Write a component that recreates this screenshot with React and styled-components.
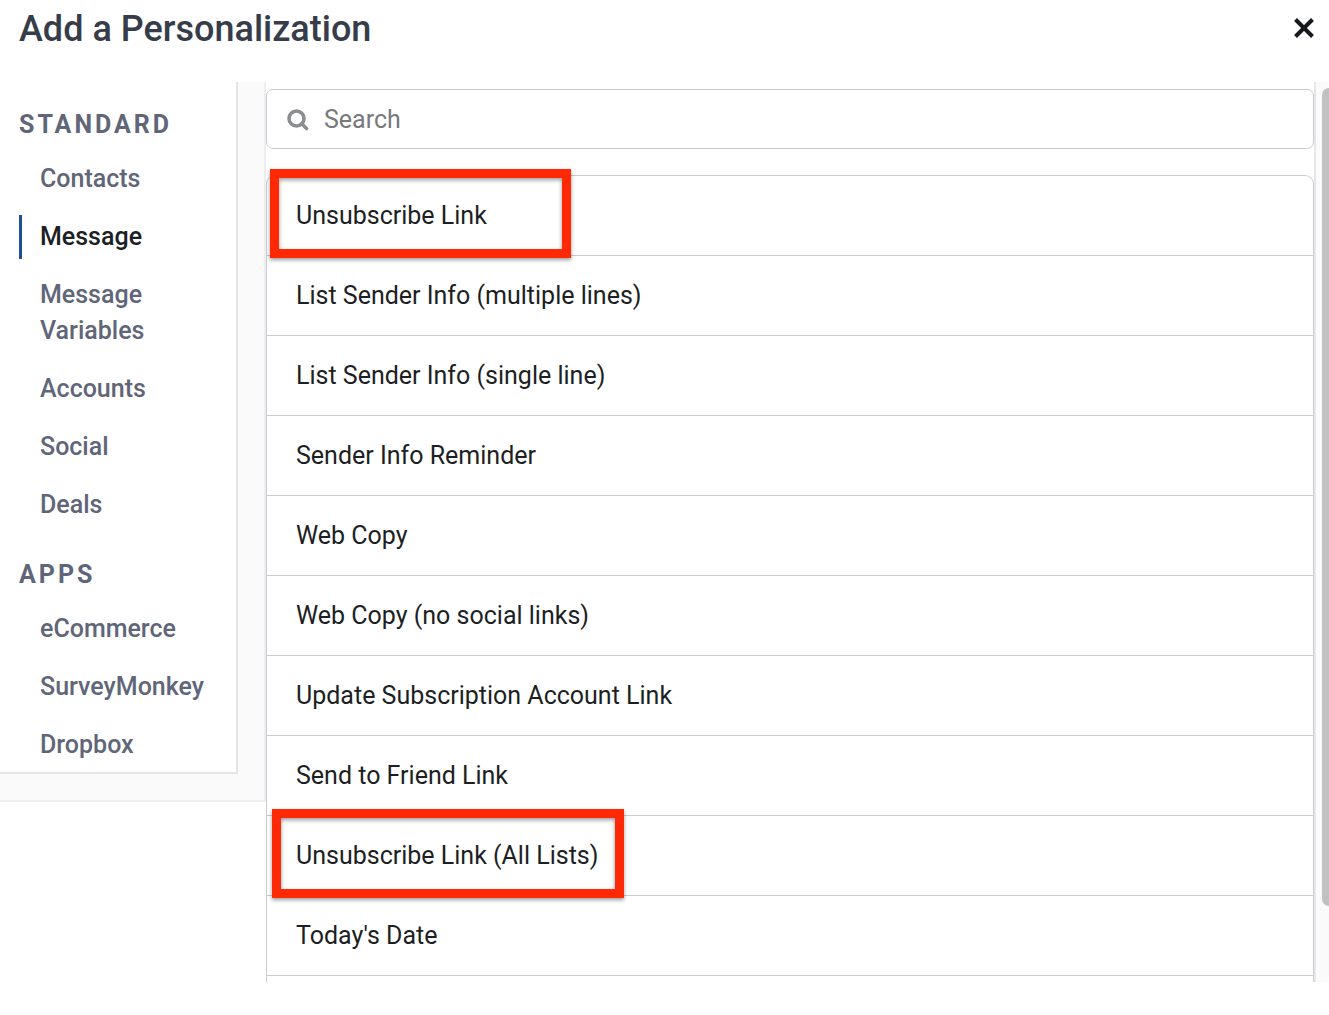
import React, { useState } from "react";
import styled, { createGlobalStyle } from "styled-components";

const sections = [
	{
		title: "Standard",
		items: ["Contacts", "Message", "Message Variables", "Accounts", "Social", "Deals"],
	},
	{
		title: "Apps",
		items: ["eCommerce", "SurveyMonkey", "Dropbox"],
	},
];

const personalizations = [
	{ label: "Unsubscribe Link", mark: { left: 3, width: 301 } },
	{ label: "List Sender Info (multiple lines)" },
	{ label: "List Sender Info (single line)" },
	{ label: "Sender Info Reminder" },
	{ label: "Web Copy" },
	{ label: "Web Copy (no social links)" },
	{ label: "Update Subscription Account Link" },
	{ label: "Send to Friend Link" },
	{ label: "Unsubscribe Link (All Lists)", mark: { left: 5, width: 352 } },
	{ label: "Today's Date" },
];

export default function App() {
	const [selected, setSelected] = useState("Message");
	const [query, setQuery] = useState("");

	const visible = personalizations.filter((item) =>
		item.label.toLowerCase().includes(query.toLowerCase())
	);

	return (
		<>
			<GlobalStyle />
			<Modal>
				<Header>
					<h1>Add a Personalization</h1>
					<CloseButton type="button" aria-label="Close">
						<svg viewBox="0 0 22 22" width="22" height="22">
							<path d="M2.5 2.5L19.5 19.5M19.5 2.5L2.5 19.5" stroke="currentColor" strokeWidth="4" />
						</svg>
					</CloseButton>
				</Header>

				<Body>
					<SidebarWrap>
						<Sidebar>
							{sections.map((section) => (
								<Section key={section.title}>
									<h2>{section.title}</h2>
									<ul>
										{section.items.map((item) => (
											<li key={item}>
												<NavButton
													type="button"
													$active={item === selected}
													onClick={() => setSelected(item)}
												>
													{item}
												</NavButton>
											</li>
										))}
									</ul>
								</Section>
							))}
						</Sidebar>
					</SidebarWrap>

					<Content>
						<SearchBox>
							<svg viewBox="0 0 22 22" width="22" height="22" aria-hidden="true">
								<circle cx="9.5" cy="9.5" r="7.5" fill="none" stroke="currentColor" strokeWidth="3.6" />
								<path
									d="M15 15L19.5 19.5"
									stroke="currentColor"
									strokeWidth="3.6"
									strokeLinecap="round"
								/>
							</svg>
							<input
								type="text"
								placeholder="Search"
								aria-label="Search"
								value={query}
								onChange={(e) => setQuery(e.target.value)}
							/>
						</SearchBox>

						<List>
							{visible.map((item) => (
								<Row key={item.label}>
									<button type="button">{item.label}</button>
									{item.mark && <Mark $left={item.mark.left} $width={item.mark.width} />}
								</Row>
							))}
						</List>
					</Content>

					<ScrollTrack>
						<ScrollThumb />
					</ScrollTrack>
				</Body>
			</Modal>
		</>
	);
}

const GlobalStyle = createGlobalStyle`
	* {
		box-sizing: border-box;
	}

	body {
		margin: 0;
		background-color: #fff;
		color: #1c1f24;
		font-family: Roboto, "Liberation Sans", sans-serif;
		font-size: 25px;
		line-height: 36px;
	}

	h1, h2, ul {
		margin: 0;
		padding: 0;
	}

	ul {
		list-style: none;
	}

	button, input {
		font: inherit;
		color: inherit;
		border: none;
		background: none;
	}

	button {
		cursor: pointer;
	}
`;

const Modal = styled.div`
	display: flex;
	flex-direction: column;
	height: 100vh;
	padding-bottom: 33px;
	overflow: hidden;
`;

const Header = styled.header`
	display: flex;
	flex: none;
	justify-content: space-between;
	align-items: flex-start;
	height: 82px;
	padding: 6px 14px 0 19px;

	h1 {
		color: #363c4a;
		font-size: 36px;
		font-weight: 500;
		line-height: 46px;
	}
`;

const CloseButton = styled.button`
	display: flex;
	align-items: center;
	height: 44px;
	padding: 0;
	color: #17191c;
`;

const Body = styled.div`
	display: flex;
	flex: 1;
	min-height: 0;
	overflow: hidden;
`;

const SidebarWrap = styled.div`
	flex: none;
	align-self: flex-start;
	width: 266px;
	padding: 0 26px 26px 0;
	background-color: #fafafa;
	border-right: 2px solid #eceef0;
	border-bottom: 2px solid #eceef0;
`;

const Sidebar = styled.nav`
	padding: 25px 20px 5px 19px;
	background-color: #fff;
	border-right: 2px solid #e3e5e7;
	border-bottom: 2px solid #e3e5e7;
`;

const Section = styled.section`
	& + & {
		margin-top: 30px;
	}

	h2 {
		margin-bottom: 14px;
		color: #5f6679;
		font-size: 25px;
		font-weight: 700;
		letter-spacing: 3px;
		text-transform: uppercase;
	}

	ul {
		display: flex;
		flex-direction: column;
		gap: 14px;
	}
`;

const NavButton = styled.button`
	width: 100%;
	padding: 4px 0 4px 18px;
	border-left: 3px solid ${({ $active }) => ($active ? "#1f5199" : "transparent")};
	color: ${({ $active }) => ($active ? "#1c1f24" : "#5f6679")};
	font-weight: 500;
	text-align: left;
`;

const Content = styled.main`
	display: flex;
	flex: 1;
	flex-direction: column;
	gap: 26px;
	min-width: 0;
	padding-top: 7px;
`;

const SearchBox = styled.label`
	display: flex;
	flex: none;
	align-items: center;
	gap: 15px;
	height: 60px;
	padding: 2px 20px 0;
	border: 1px solid #c9cdd3;
	border-radius: 7px;
	color: #8b8d90;

	input {
		flex: 1;
		min-width: 0;
		padding: 0;
		color: #1c1f24;
		outline: none;

		&::placeholder {
			color: #77797c;
			opacity: 1;
		}
	}
`;

const List = styled.ul`
	flex: 1;
	border: 1px solid #c9cdd3;
	border-bottom: none;
	border-radius: 9px 9px 0 0;
`;

const Row = styled.li`
	position: relative;
	border-bottom: 1px solid #c9cdd3;

	button {
		display: block;
		width: 100%;
		padding: 22px 29px 21px;
		text-align: left;
	}
`;

/* highlight frame drawn over a row */
const Mark = styled.span`
	position: absolute;
	top: -7px;
	bottom: -3px;
	left: ${({ $left }) => $left}px;
	width: ${({ $width }) => $width}px;
	border: 9px solid #ff2a05;
	box-shadow: 0 2px 4px rgba(0, 0, 0, 0.4), inset 0 2px 4px rgba(0, 0, 0, 0.4);
	pointer-events: none;
`;

const ScrollTrack = styled.div`
	display: flex;
	flex: none;
	justify-content: flex-end;
	width: 15px;
	padding-top: 6px;
	background-color: #fafafa;
	border-left: 2px solid #e6e7ea;
`;

const ScrollThumb = styled.div`
	width: 7px;
	height: 91.5%;
	border-radius: 7px 0 0 7px;
	background-color: #c1c1c1;
`;
